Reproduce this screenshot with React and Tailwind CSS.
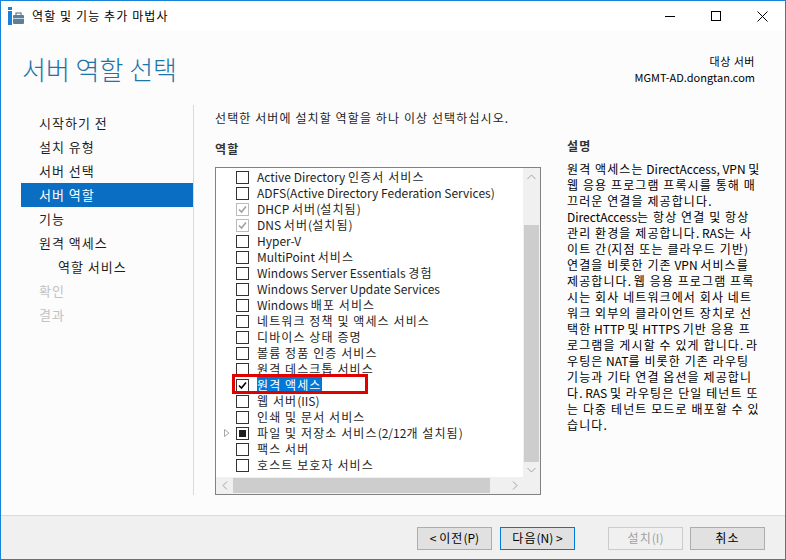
import React from 'react';

const ROLES = [
  { label: 'Active Directory 인증서 서비스', state: 'off' },
  { label: 'ADFS(Active Directory Federation Services)', state: 'off' },
  { label: 'DHCP 서버(설치됨)', state: 'installed' },
  { label: 'DNS 서버(설치됨)', state: 'installed' },
  { label: 'Hyper-V', state: 'off' },
  { label: 'MultiPoint 서비스', state: 'off' },
  { label: 'Windows Server Essentials 경험', state: 'off' },
  { label: 'Windows Server Update Services', state: 'off' },
  { label: 'Windows 배포 서비스', state: 'off' },
  { label: '네트워크 정책 및 액세스 서비스', state: 'off' },
  { label: '디바이스 상태 증명', state: 'off' },
  { label: '볼륨 정품 인증 서비스', state: 'off' },
  { label: '원격 데스크톱 서비스', state: 'off' },
  { label: '원격 액세스', state: 'on', selected: true },
  { label: '웹 서버(IIS)', state: 'off' },
  { label: '인쇄 및 문서 서비스', state: 'off' },
  { label: '파일 및 저장소 서비스(2/12개 설치됨)', state: 'partial', expander: true },
  { label: '팩스 서버', state: 'off' },
  { label: '호스트 보호자 서비스', state: 'off' },
];

const STEPS = [
  { label: '시작하기 전' },
  { label: '설치 유형' },
  { label: '서버 선택' },
  { label: '서버 역할', active: true },
  { label: '기능' },
  { label: '원격 액세스' },
  { label: '역할 서비스', sub: true },
  { label: '확인', disabled: true },
  { label: '결과', disabled: true },
];

const DESC = [
  '원격 액세스는 DirectAccess, VPN 및',
  '웹 응용 프로그램 프록시를 통해 매',
  '끄러운 연결을 제공합니다.',
  'DirectAccess는 항상 연결 및 항상',
  '관리 환경을 제공합니다. RAS는 사',
  '이트 간(지점 또는 클라우드 기반)',
  '연결을 비롯한 기존 VPN 서비스를',
  '제공합니다. 웹 응용 프로그램 프록',
  '시는 회사 네트워크에서 회사 네트',
  '워크 외부의 클라이언트 장치로 선',
  '택한 HTTP 및 HTTPS 기반 응용 프',
  '로그램을 게시할 수 있게 합니다. 라',
  '우팅은 NAT를 비롯한 기존 라우팅',
  '기능과 기타 연결 옵션을 제공합니',
  '다. RAS 및 라우팅은 단일 테넌트 또',
  '는 다중 테넌트 모드로 배포할 수 있',
  '습니다.',
];

// hangul runs get a little extra tracking so they sit as wide as the original
const HANGUL = /([\u3131-\u318E\uAC00-\uD7A3]+(?: +[\u3131-\u318E\uAC00-\uD7A3]+)*)/;

function K({ t, cls = 'tracking-[1.1px]' }) {
  return t.split(HANGUL).map((p, i) =>
    i % 2 ? (
      <span key={i} className={cls}>
        {p}
      </span>
    ) : (
      p
    )
  );
}

function Check({ state }) {
  if (state === 'installed') {
    return (
      <span className="w-[13px] h-[13px] border border-[#bcbcbc] bg-white flex items-center justify-center shrink-0">
        <svg width="9" height="9" viewBox="0 0 9 9"><path d="M1 4.5 L3.5 7 L8 1.5" fill="none" stroke="#a0a0a0" strokeWidth="1.6" /></svg>
      </span>
    );
  }
  if (state === 'on') {
    return (
      <span className="w-[13px] h-[13px] border border-[#333] bg-white flex items-center justify-center shrink-0">
        <svg width="9" height="9" viewBox="0 0 9 9"><path d="M1 4.5 L3.5 7 L8 1.5" fill="none" stroke="#000" strokeWidth="1.6" /></svg>
      </span>
    );
  }
  if (state === 'partial') {
    return (
      <span className="w-[13px] h-[13px] border border-[#333] bg-white flex items-center justify-center shrink-0">
        <span className="w-[7px] h-[7px] bg-[#1e1e1e]" />
      </span>
    );
  }
  return <span className="w-[13px] h-[13px] border border-[#333] bg-white shrink-0" />;
}

function Btn({ children, primary, disabled }) {
  return (
    <button
      className={
        'w-[75px] h-[23px] text-[12px] flex items-center justify-center border ' +
        (disabled
          ? 'bg-[#f0f0f0] border-[#cccccc] text-[#a0a0a0]'
          : primary
          ? 'bg-[#e1e1e1] border-[#0078d7] text-black'
          : 'bg-[#e1e1e1] border-[#adadad] text-black')
      }
    >
      <span className="whitespace-pre">{children}</span>
    </button>
  );
}

export default function App() {
  return (
    <div
      className="w-[786px] h-[560px] border border-[#1883d7] flex flex-col bg-white text-[12px] text-[#1e1e1e] overflow-hidden"
      style={{ fontFamily: '"Noto Sans CJK KR", "Noto Sans", sans-serif' }}
    >
      {/* title bar */}
      <div className="h-[30px] flex items-center bg-white shrink-0">
        <div className="pl-[6px] pr-[7px] flex items-center">
          <svg width="18" height="18" viewBox="0 0 18 18">
            <rect x="1" y="0" width="4" height="3" fill="#1f7fd4" />
            <rect x="1" y="4" width="4" height="14" fill="#1f7fd4" />
            <rect x="6" y="8" width="11" height="9" rx="1" fill="#5f7f99" />
            <rect x="9" y="6" width="5" height="3" fill="none" stroke="#5f7f99" strokeWidth="1.2" />
            <rect x="6" y="11" width="11" height="1" fill="#c9d6e0" />
          </svg>
        </div>
        <span className="text-[12px] text-black"><K t="역할 및 기능 추가 마법사" /></span>
        <div className="ml-auto flex h-full">
          <div className="w-[46px] flex items-center justify-center">
            <svg width="10" height="10" viewBox="0 0 10 10"><path d="M0 5.5 H10" stroke="#000" strokeWidth="1" /></svg>
          </div>
          <div className="w-[46px] flex items-center justify-center">
            <svg width="10" height="10" viewBox="0 0 10 10"><rect x="0.5" y="0.5" width="9" height="9" fill="none" stroke="#000" strokeWidth="1" /></svg>
          </div>
          <div className="w-[46px] flex items-center justify-center">
            <svg width="11" height="11" viewBox="0 0 11 11"><path d="M0.5 0.5 L10.5 10.5 M10.5 0.5 L0.5 10.5" stroke="#000" strokeWidth="1" /></svg>
          </div>
        </div>
      </div>

      {/* content */}
      <div className="flex-1 bg-[#fcfcfc] flex flex-col min-h-0">
        <div className="flex items-start justify-between pl-[21px] pr-[30px] pt-[21px] h-[74px] shrink-0">
          <h1 className="text-[26px] leading-[34px] font-light text-[#1c74a9]">서버 역할 선택</h1>
          <div className="text-right text-[11px] leading-[16px] pt-[1px] text-black">
            <div><K t="대상 서버" cls="tracking-[0.5px]" /></div>
            <div>MGMT-AD.dongtan.com</div>
          </div>
        </div>

        <div className="flex flex-1 min-h-0 pb-[20px]">
          {/* left nav */}
          <div className="w-[193px] pl-[20px] border-r border-[#d9d9d9] pt-[6px] shrink-0">
            {STEPS.map((s) => (
              <div
                key={s.label}
                className={
                  'h-[24px] flex items-center text-[13px] tracking-[1px] ' +
                  (s.sub ? 'pl-[37px] ' : 'pl-[18px] ') +
                  (s.active ? 'bg-[#0a6fc2] text-white ' : s.disabled ? 'text-[#c2c2c2] ' : 'text-[#1e1e1e] ')
                }
              >
                {s.label}
              </div>
            ))}
          </div>

          {/* main */}
          <div className="flex-1 flex pl-[21px] pt-[4px]">
            <div className="w-[326px] flex flex-col shrink-0">
              <div className="h-[18px] leading-[18px] whitespace-nowrap"><K t="선택한 서버에 설치할 역할을 하나 이상 선택하십시오." /></div>
              <div className="h-[18px] leading-[18px] mt-[13px] font-bold text-[#333]"><K t="역할" /></div>
              <div className="mt-[9px] h-[329px] border border-[#828282] bg-white flex flex-col">
                <div className="flex flex-1 min-h-0">
                  <div className="flex-1 overflow-hidden relative">
                    <div className="mt-[1px]">
                      {ROLES.map((r) => (
                        <div key={r.label} className="h-[16px] flex items-center whitespace-nowrap">
                          <span className="w-[20px] pl-[8px] flex items-center shrink-0">
                            {r.expander && (
                              <svg width="6" height="8" viewBox="0 0 6 8"><path d="M0.5 0.5 L5 4 L0.5 7.5 Z" fill="none" stroke="#a6a6a6" strokeWidth="1" /></svg>
                            )}
                          </span>
                          <Check state={r.state} />
                          <span
                            className={
                              'leading-[16px] ml-[8px] ' +
                              (r.selected ? 'bg-[#0078d7] text-white' : '')
                            }
                          >
                            <K t={r.label} />
                          </span>
                        </div>
                      ))}
                    </div>
                    <div className="absolute left-[16px] top-[206px] w-[136px] h-[20px] border-[3px] border-[#e00000]" />
                  </div>
                  {/* vertical scrollbar */}
                  <div className="w-[17px] bg-[#f0f0f0] flex flex-col shrink-0">
                    <div className="h-[17px] flex items-center justify-center">
                      <svg width="9" height="6" viewBox="0 0 9 6"><path d="M0.5 5 L4.5 1 L8.5 5" fill="none" stroke="#a3a3a3" strokeWidth="1" /></svg>
                    </div>
                    <div className="h-[40px]" />
                    <div className="h-[237px] mx-[1px] bg-[#cdcdcd]" />
                    <div className="flex-1 flex items-center justify-center">
                      <svg width="9" height="6" viewBox="0 0 9 6"><path d="M0.5 1 L4.5 5 L8.5 1" fill="none" stroke="#a3a3a3" strokeWidth="1" /></svg>
                    </div>
                  </div>
                </div>
                {/* horizontal scrollbar */}
                <div className="h-[17px] flex shrink-0">
                  <div className="flex-1 bg-[#f0f0f0] flex items-center">
                    <div className="w-[17px] flex items-center justify-center">
                      <svg width="6" height="9" viewBox="0 0 6 9"><path d="M5 0.5 L1 4.5 L5 8.5" fill="none" stroke="#a3a3a3" strokeWidth="1" /></svg>
                    </div>
                    <div className="w-[257px] h-[15px] bg-[#cdcdcd]" />
                    <div className="flex-1 flex items-center justify-end pr-[5px]">
                      <svg width="6" height="9" viewBox="0 0 6 9"><path d="M1 0.5 L5 4.5 L1 8.5" fill="none" stroke="#a3a3a3" strokeWidth="1" /></svg>
                    </div>
                  </div>
                  <div className="w-[17px] bg-[#f0f0f0]" />
                </div>
              </div>
            </div>

            <div className="flex-1 pl-[26px] pt-[28px] pr-[10px]">
              <div className="h-[18px] leading-[18px] font-bold text-[#333]"><K t="설명" /></div>
              <div className="mt-[6px] text-black">
                {DESC.map((l, i) => (
                  <div key={i} className="h-[16px] leading-[16px] whitespace-nowrap"><K t={l} /></div>
                ))}
              </div>
            </div>
          </div>
        </div>
      </div>

      {/* footer */}
      <div className="h-[44px] shrink-0 bg-[#f0f0f0] border-t border-[#dadada] flex items-center justify-end pr-[20px] pt-[1px]">
        <div className="flex gap-[8px]">
          <Btn>{'< '}<K t="이전" />(P)</Btn>
          <Btn primary><K t="다음" />{'(N) >'}</Btn>
        </div>
        <div className="flex gap-[7px] ml-[33px]">
          <Btn disabled><K t="설치" />(I)</Btn>
          <Btn><K t="취소" /></Btn>
        </div>
      </div>
    </div>
  );
}
